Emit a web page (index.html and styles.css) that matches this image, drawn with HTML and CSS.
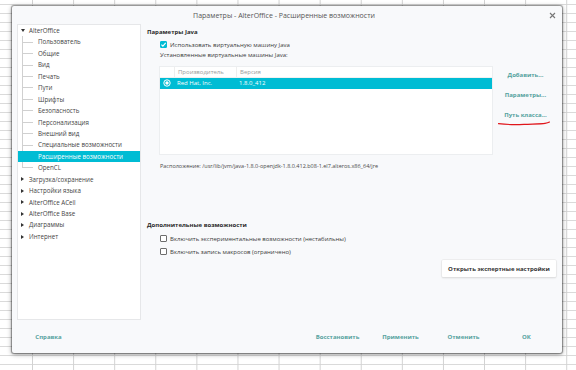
FILE: index.html
```html
<!DOCTYPE html>
<html lang="ru">
<head>
<meta charset="utf-8">
<title>Параметры</title>
<link rel="stylesheet" href="styles.css">
</head>
<body>
<div class="dialog">
  <div class="titlebar">
    <span></span>
    <span class="title">Параметры - AlterOffice - Расширенные возможности</span>
    <span class="close"><svg width="7" height="7" viewBox="0 0 7 7"><path d="M1 1L6 6M6 1L1 6" stroke="#777" stroke-width="1.1" fill="none"/></svg></span>
  </div>
  <div class="main">
    <div class="tree">
      <div class="node"><span class="tri open"></span>AlterOffice</div>
      <div class="child">Пользователь</div>
      <div class="child">Общие</div>
      <div class="child">Вид</div>
      <div class="child">Печать</div>
      <div class="child">Пути</div>
      <div class="child">Шрифты</div>
      <div class="child">Безопасность</div>
      <div class="child">Персонализация</div>
      <div class="child">Внешний вид</div>
      <div class="child">Специальные возможности</div>
      <div class="child selected">Расширенные возможности</div>
      <div class="child last">OpenCL</div>
      <div class="node"><span class="tri"></span>Загрузка/сохранение</div>
      <div class="node"><span class="tri"></span>Настройки языка</div>
      <div class="node"><span class="tri"></span>AlterOffice ACell</div>
      <div class="node"><span class="tri"></span>AlterOffice Base</div>
      <div class="node"><span class="tri"></span>Диаграммы</div>
      <div class="node"><span class="tri"></span>Интернет</div>
    </div>
    <div class="content">
      <div class="heading">Параметры Java</div>
      <div class="check-row"><span class="cb checked"><svg width="7" height="7" viewBox="0 0 7 7"><path d="M1.4 3.6L2.9 5.1L5.7 1.9" stroke="#fff" stroke-width="1.1" fill="none"/></svg></span>Использовать виртуальную машину Java</div>
      <div class="label">Установленные виртуальные машины Java:</div>
      <div class="jvm">
        <div class="table">
          <div class="thead">
            <span class="c0"></span><span class="c1">Производитель</span><span class="c2">Версия</span>
          </div>
          <div class="trow sel">
            <span class="c0"><svg width="8" height="8" viewBox="0 0 8 8"><circle cx="4" cy="4" r="3.2" stroke="#fff" stroke-width="1" fill="none"/><circle cx="4" cy="4" r="1.7" fill="#fff"/></svg></span><span class="c1">Red Hat, Inc.</span><span class="c2">1.8.0_412</span>
          </div>
        </div>
        <div class="side">
          <span class="link">Добавить...</span>
          <span class="link">Параметры...</span>
          <span class="link marked">Путь класса...<svg class="scribble" width="52" height="5" viewBox="0 0 52 5"><path d="M0.5 2.6C8 3.6 16 3.9 26 3.4C35 3 43 3 47 2.4C49.5 2 50.5 1.6 51.5 1" stroke="#e0161b" stroke-width="1.1" fill="none" stroke-linecap="round"/></svg></span>
        </div>
      </div>
      <div class="location">Расположение: /usr/lib/jvm/java-1.8.0-openjdk-1.8.0.412.b08-1.el7.alteros.x86_64/jre</div>
      <div class="heading extra">Дополнительные возможности</div>
      <div class="options">
        <div class="check-row opt"><span class="cb"></span>Включить экспериментальные возможности (нестабильны)</div>
        <div class="check-row opt"><span class="cb"></span>Включить запись макросов (ограничено)</div>
      </div>
      <div class="expert"><span class="btn">Открыть экспертные настройки</span></div>
    </div>
  </div>
  <div class="footer">
    <span class="fbtn">Справка</span>
    <span class="spacer"></span>
    <span class="fbtn">Восстановить</span>
    <span class="fbtn">Применить</span>
    <span class="fbtn">Отменить</span>
    <span class="fbtn">ОК</span>
  </div>
</div>
</body>
</html>
```

FILE: styles.css
```css
* { box-sizing: border-box; }
html, body { margin: 0; padding: 0; }
body {
  width: 576px;
  height: 370px;
  overflow: hidden;
  font-family: "Open Sans", "Noto Sans", sans-serif;
  font-size: 6px;
  color: #3a3a3a;
  background-color: #fff;
  background-image:
    linear-gradient(to right, #d2d2d2 1px, transparent 1px),
    linear-gradient(to bottom, #dadada 1px, transparent 1px);
  background-size: 41.1px 100%, 100% 9px;
  background-position: 32px 0, 0 4px;
  padding-top: 6px;
}
.dialog {
  margin-left: 12px;
  width: 550px;
  height: 347px;
  background: #f8f9fb;
  box-shadow: 0 0 1px 1px rgba(0,0,0,0.35), 0 1px 5px rgba(0,0,0,0.45);
  border-radius: 2px;
  display: flex;
  flex-direction: column;
}
.titlebar {
  height: 18px;
  display: grid;
  grid-template-columns: 1fr auto 1fr;
  align-items: center;
  padding-right: 6px;
}
.title { color: #555; font-size: 7px; }
.close { justify-self: end; display: flex; }
.main {
  display: flex;
  gap: 6px;
  padding: 0 5px;
  height: 296px;
}
.tree {
  width: 124px;
  flex: none;
  background: #fff;
  border: 1px solid #e6e7e9;
  font-size: 6.2px;
}
.node, .child {
  height: 11.45px;
  line-height: 11.45px;
  white-space: nowrap;
  color: #444;
}
.node { padding-left: 3px; display: flex; align-items: center; }
.tri {
  width: 0; height: 0;
  margin-right: 5px;
  border-top: 2.5px solid transparent;
  border-bottom: 2.5px solid transparent;
  border-left: 3.5px solid #333;
}
.tri.open {
  border-left: 2.5px solid transparent;
  border-right: 2.5px solid transparent;
  border-top: 3.5px solid #333;
  border-bottom: 0;
  margin-right: 4px;
}
.child {
  padding-left: 20px;
  background-image: linear-gradient(#d0d0d0, #d0d0d0), linear-gradient(#d0d0d0, #d0d0d0);
  background-repeat: no-repeat;
  background-position: 4px 0, 4px 50%;
  background-size: 1px 100%, 11px 1px;
}
.child.last { background-size: 1px 50%, 11px 1px; }
.child.selected {
  background: #00bcd4;
  color: #fff;
}
.content {
  flex: 1;
  display: flex;
  flex-direction: column;
  padding-right: 1px;
}
.heading {
  font-weight: 700;
  color: #2a2a2a;
  line-height: 11px;
  margin-top: 3px;
}
.heading.extra { margin-top: 48px; }
.check-row {
  display: flex;
  align-items: center;
  height: 11px;
  margin-top: 1px;
  padding-left: 13px;
  color: #3a3a3a;
}
.options { margin-top: 1px; }
.check-row.opt { height: 13px; margin-top: 0; }
.cb {
  width: 7px; height: 7px;
  border: 1px solid #6d6d6d;
  border-radius: 1px;
  background: #fff;
  margin-right: 3px;
  display: flex;
  flex: none;
}
.cb.checked { background: #00bcd4; border-color: #00bcd4; }
.cb.checked svg { margin: -1px; }
.label {
  padding-left: 13px;
  line-height: 11px;
  color: #3a3a3a;
}
.jvm {
  display: flex;
  margin-top: 5px;
  padding-left: 12px;
}
.table {
  width: 334px;
  height: 89px;
  background: #fff;
  border: 1px solid #eceef0;
}
.thead, .trow { display: flex; height: 10.5px; align-items: center; }
.thead { color: #9a9a9a; border-bottom: 1px solid #f1f1f1; }
.thead span { border-left: 1px solid #eee; height: 100%; display: flex; align-items: center; padding-left: 3px; }
.thead .c0 { border-left: 0; }
.c0 { width: 14px; flex: none; display: flex; justify-content: center; }
.c1 { width: 62px; flex: none; }
.c2 { flex: 1; }
.trow .c1, .trow .c2 { padding-left: 3px; }
.trow.sel { background: #00bcd4; color: #fff; height: 11px; }
.side {
  flex: 1;
  display: flex;
  flex-direction: column;
  align-items: center;
  margin-top: -1px;
  padding-left: 2px;
}
.link {
  height: 20px;
  display: flex;
  align-items: center;
  font-weight: 700;
  color: #55a29e;
  position: relative;
}
.scribble { position: absolute; left: -6px; top: 16px; }
.location {
  margin-top: 5px;
  padding-left: 13px;
  line-height: 12px;
  font-size: 5.5px;
  color: #4a4a4a;
}
.expert { display: flex; justify-content: flex-end; margin-top: 2px; }
.btn {
  width: 114px;
  height: 17px;
  background: #fff;
  display: flex;
  align-items: center;
  justify-content: center;
  font-weight: 700;
  color: #333;
  box-shadow: 0 0 0 0.5px #e3e3e3, 0 1px 2px rgba(0,0,0,0.15);
  border-radius: 1px;
}
.footer {
  flex: 1;
  display: flex;
  align-items: center;
  padding: 0 4px 0 5px;
}
.spacer { flex: 1; }
.fbtn {
  width: 63px;
  text-align: center;
  font-weight: 700;
  color: #55a29e;
}
```
